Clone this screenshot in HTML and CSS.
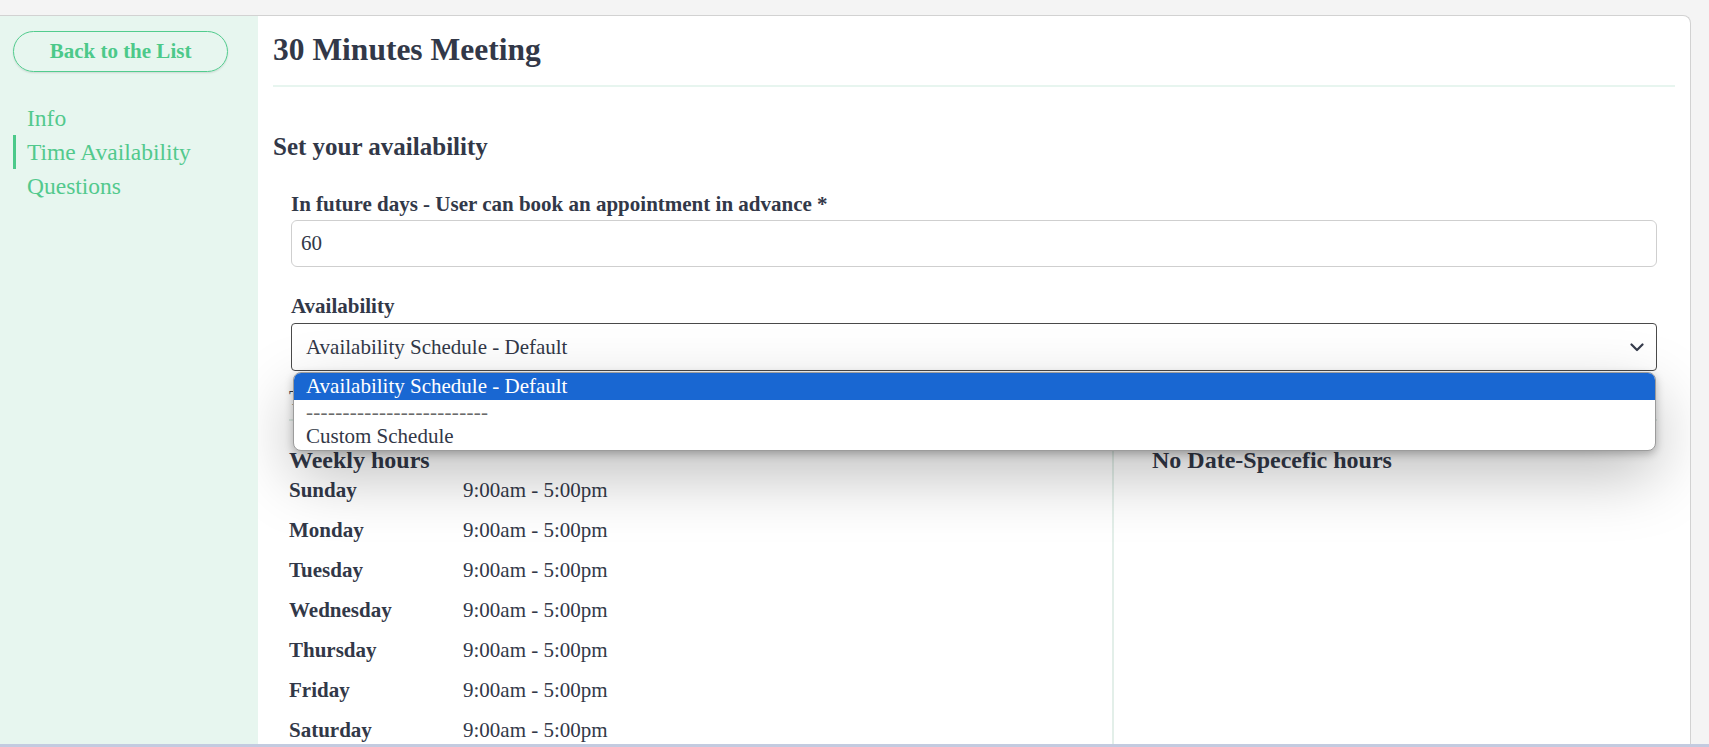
FILE: index.html
```html
<!DOCTYPE html>
<html lang="en">
<head>
<meta charset="utf-8">
<title>30 Minutes Meeting</title>
<link rel="stylesheet" href="styles.css">
</head>
<body>
<div class="frame">
  <div class="card">
    <aside class="sidebar">
      <button class="back" type="button">Back to the List</button>
      <nav class="nav">
        <a class="nav-item">Info</a>
        <a class="nav-item active">Time Availability</a>
        <a class="nav-item">Questions</a>
      </nav>
    </aside>
    <main class="main">
      <h1 class="title">30 Minutes Meeting</h1>
      <h2 class="section-title">Set your availability</h2>
      <div class="form">
        <div class="field">
          <label class="label">In future days - User can book an appointment in advance *</label>
          <div class="input">60</div>
        </div>
        <div class="field field-select">
          <label class="label label-2">Availability</label>
          <div class="select">
            <span>Availability Schedule - Default</span>
            <svg class="chevron" width="14" height="9" viewBox="0 0 14 9"><path d="M1.5 1.5 L7 7 L12.5 1.5" fill="none" stroke="#363c4c" stroke-width="2.2" stroke-linecap="round" stroke-linejoin="round"/></svg>
          </div>
          <div class="popup">
            <div class="opt opt-selected">Availability Schedule - Default</div>
            <div class="opt opt-sep">-------------------------</div>
            <div class="opt opt-last">Custom Schedule</div>
          </div>
        </div>
        <div class="tz">Timezone: Asia/Kolkata</div>
        <div class="hours">
          <div class="col col-weekly">
            <h3 class="col-title">Weekly hours</h3>
            <div class="row"><span class="day">Sunday</span><span class="time">9:00am - 5:00pm</span></div>
            <div class="row"><span class="day">Monday</span><span class="time">9:00am - 5:00pm</span></div>
            <div class="row"><span class="day">Tuesday</span><span class="time">9:00am - 5:00pm</span></div>
            <div class="row"><span class="day">Wednesday</span><span class="time">9:00am - 5:00pm</span></div>
            <div class="row"><span class="day">Thursday</span><span class="time">9:00am - 5:00pm</span></div>
            <div class="row"><span class="day">Friday</span><span class="time">9:00am - 5:00pm</span></div>
            <div class="row"><span class="day">Saturday</span><span class="time">9:00am - 5:00pm</span></div>
          </div>
          <div class="col col-specific">
            <h3 class="col-title">No Date-Specefic hours</h3>
          </div>
        </div>
      </div>
    </main>
  </div>
</div>
</body>
</html>
```

FILE: styles.css
```css
html, body {
  margin: 0;
  padding: 0;
}

body {
  background: #f4f4f4;
  font-family: "Liberation Serif", "Times New Roman", serif;
  color: #323848;
}

.frame {
  height: 747px;
  box-sizing: border-box;
  padding: 15px 18px 0 0;
  border-bottom: 3px solid #c3cbe0;
  overflow: hidden;
  display: flex;
}

.card {
  flex: 1;
  display: grid;
  grid-template-columns: 258px 1fr;
  background: #fff;
  border: 1px solid #d2d2d2;
  border-left: 0;
  border-bottom: 0;
  border-top-right-radius: 8px;
  overflow: hidden;
}

/* Sidebar */
.sidebar {
  background: #e7f6ef;
  padding: 15px 0 0 13px;
}

.back {
  display: block;
  width: 215px;
  height: 41px;
  border: 1px solid #52cc8e;
  border-radius: 21px;
  background: transparent;
  color: #4cc98a;
  font-family: "Liberation Serif", "Times New Roman", serif;
  font-weight: bold;
  font-size: 21px;
  padding: 0;
  box-shadow: 0 1px 2px rgba(0, 0, 0, 0.12);
}

.nav {
  margin-top: 29px;
  display: flex;
  flex-direction: column;
}

.nav-item {
  display: block;
  font-size: 23.5px;
  line-height: 34px;
  color: #52c98d;
  padding-left: 11px;
  border-left: 3px solid transparent;
}

.nav-item.active {
  border-left-color: #4cc98a;
}

/* Main */
.main {
  padding: 0 15px;
  overflow: hidden;
  min-width: 0;
}

.title {
  margin: 0;
  padding: 16px 0 17px;
  font-size: 31.5px;
  line-height: 36px;
  font-weight: bold;
  border-bottom: 2px solid #e7f5ef;
}

.section-title {
  margin: 45px 0 0;
  font-size: 25px;
  line-height: 30px;
  font-weight: bold;
}

.form {
  padding: 0 18px 0 16px;
}

.field {
  margin-left: 2px;
  display: flex;
  flex-direction: column;
}

.field-select {
  position: relative;
}

.label {
  display: block;
  margin-top: 30px;
  font-size: 21px;
  line-height: 24px;
  font-weight: bold;
}

.label-2 {
  margin-top: 27px;
}

.input {
  margin-top: 4px;
  height: 47px;
  box-sizing: border-box;
  border: 1px solid #cfcfcf;
  border-radius: 6px;
  padding-left: 9px;
  font-size: 21px;
  display: flex;
  align-items: center;
}

.select {
  margin-top: 5px;
  height: 48px;
  box-sizing: border-box;
  border: 1px solid #4a4a4a;
  border-radius: 4px;
  padding: 0 12px 0 14px;
  font-size: 21px;
  display: flex;
  align-items: center;
  justify-content: space-between;
}

.chevron {
  display: block;
}

.popup {
  position: absolute;
  top: calc(100% + 1px);
  left: 2px;
  right: 1px;
  z-index: 5;
  background: #fff;
  border: 1px solid #9c9c9c;
  border-radius: 8px;
  overflow: hidden;
  box-shadow: 0 24px 64px rgba(0, 0, 0, 0.26), 0 3px 8px rgba(0, 0, 0, 0.25);
  font-size: 21px;
}

.opt {
  padding-left: 12px;
  height: 25px;
  line-height: 25px;
  color: #323848;
}

.opt-selected {
  height: 27px;
  line-height: 26px;
  background: #1967d2;
  color: #fff;
}

.opt-sep {
  color: #6a6a6a;
  letter-spacing: 0.3px;
}

.opt-last {
  height: 25px;
  line-height: 23px;
}

.tz {
  margin-top: 15px;
  font-size: 21px;
  line-height: 24px;
}

.hours {
  margin-top: 9px;
  border-top: 2px solid #e3f0ea;
  display: grid;
  grid-template-columns: 823px 1fr;
}

.col {
  padding-top: 26px;
  min-height: 400px;
}

.col-specific {
  border-left: 2px solid #e3efe9;
  padding-left: 38px;
}

.col-title {
  margin: 0 0 -3px;
  font-size: 24px;
  line-height: 26px;
  font-weight: bold;
}

.row {
  display: grid;
  grid-template-columns: 174px 1fr;
  line-height: 40px;
  font-size: 21px;
}

.day {
  font-weight: bold;
}
```
